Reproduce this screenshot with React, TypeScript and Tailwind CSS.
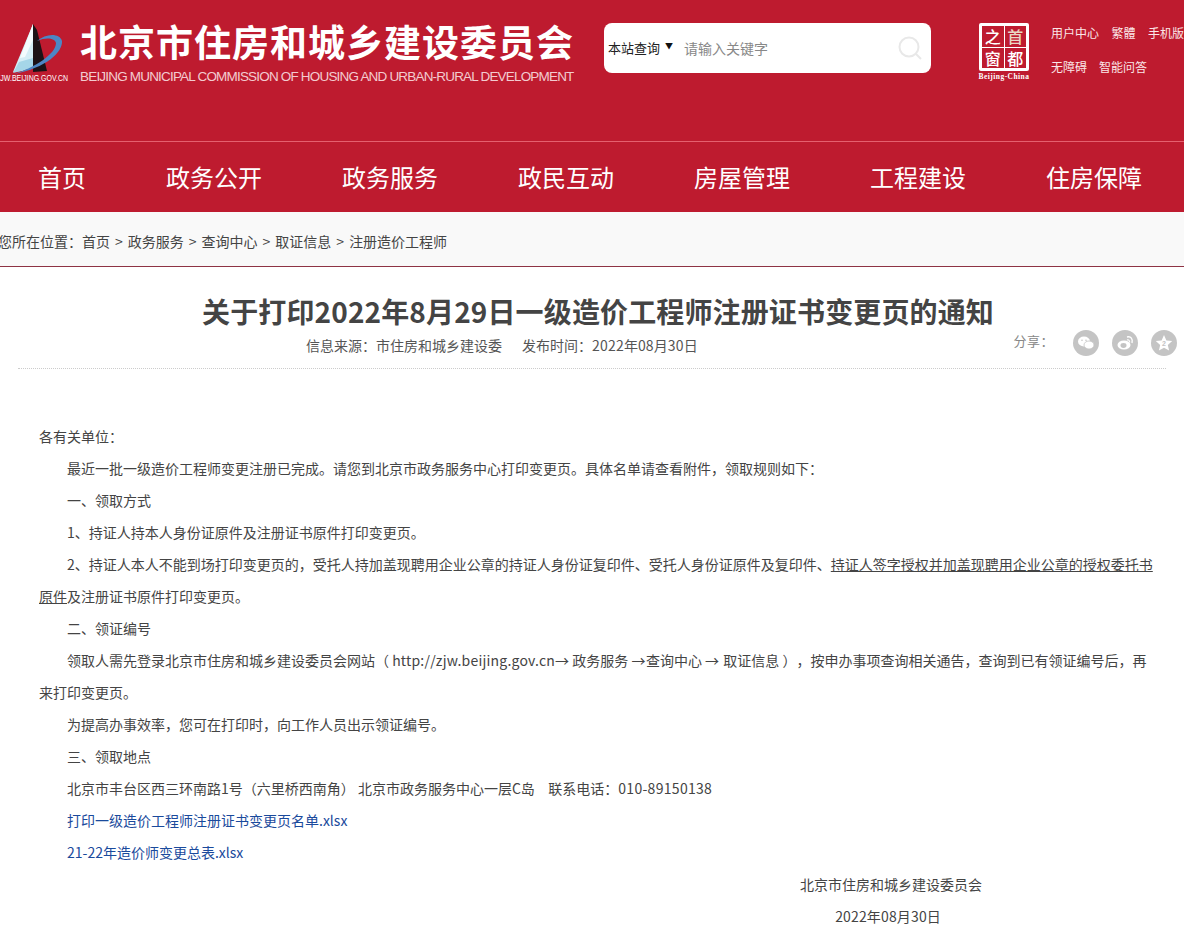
const cjk = "font-['Microsoft_YaHei','Noto_Sans_CJK_SC','Liberation_Sans',sans-serif]";

function Logo() {
  return (
    <svg width="80" height="90" viewBox="0 0 80 90" className="block">
      <path d="M33 24 L13 72 L22 71 L33 66 Z" fill="#d4edf5" />
      <path d="M33 24 L20 58 L25 57 L33 40 Z" fill="#f4fbfd" />
      <path d="M13 73 L19 62 L33 58 L33 68 Z" fill="#a5d6e8" />
      <path d="M33 24 L33 72 L47 71 L37 30 Z" fill="#1b1216" />
      <path d="M37 41 C46 33 60 33 62 41 C63 52 46 68 14 74 C34 68 56 54 56 43 C55 38 46 37 37 41 Z" fill="#4d86c4" />
      <text x="68" y="81" textAnchor="end" fill="#fff" fontSize="9" fontFamily="Liberation Sans" textLength="72" lengthAdjust="spacingAndGlyphs">ZJW.BEIJING.GOV.CN</text>
    </svg>
  );
}

function Seal() {
  return (
    <div className="flex flex-col items-center w-[54px]">
      <div className="w-[50px] h-[48px] bg-white rounded-[2px] p-[3px] grid grid-cols-2 grid-rows-2 gap-[1px]">
        {["之", "首", "窗", "都"].map((c, i) => (
          <div key={c} className={`flex items-center justify-center text-[16px] font-medium leading-none bg-[#be1b2f] ${i === 1 ? "text-[#e9d7c4]" : "text-white"}`}>{c}</div>
        ))}
      </div>
      <div className="text-[7.5px] leading-[10px] font-bold text-white font-['Liberation_Serif',serif] tracking-[.45px] whitespace-nowrap mt-[1px]">Beijing-China</div>
    </div>
  );
}

function Share({ kind }: { kind: "wx" | "wb" | "star" }) {
  return (
    <div className="w-[26px] h-[26px] rounded-full bg-[#c4c4c4] flex items-center justify-center">
      <svg width="18" height="18" viewBox="0 0 18 18" fill="#fff">
        {kind === "wx" && (
          <>
            <ellipse cx="7" cy="7.5" rx="6" ry="5" />
            <ellipse cx="12" cy="11" rx="5" ry="4" stroke="#c4c4c4" strokeWidth=".8" />
            <circle cx="5" cy="6.3" r=".8" fill="#c4c4c4" />
            <circle cx="9" cy="6.3" r=".8" fill="#c4c4c4" />
          </>
        )}
        {kind === "wb" && (
          <>
            <ellipse cx="8" cy="11" rx="6.5" ry="4.6" />
            <ellipse cx="7.5" cy="11.5" rx="3" ry="2.4" fill="#c4c4c4" />
            <path d="M11 3 C15 2 17 5 16 9" fill="none" stroke="#fff" strokeWidth="1.4" />
            <path d="M11 6 C13 5.5 14 7 13.6 8.5" fill="none" stroke="#fff" strokeWidth="1.1" />
          </>
        )}
        {kind === "star" && (
          <>
            <path d="M9 1 L11.4 6.4 L17.2 7 L12.8 10.9 L14.1 16.6 L9 13.7 L3.9 16.6 L5.2 10.9 L.8 7 L6.6 6.4 Z" />
            <text x="9" y="12" textAnchor="middle" fontSize="7" fontWeight="700" fill="#c4c4c4" fontFamily="Liberation Sans">2</text>
          </>
        )}
      </svg>
    </div>
  );
}

const nav = ["首页", "政务公开", "政务服务", "政民互动", "房屋管理", "工程建设", "住房保障"];

function P({ children, noIndent }: { children: React.ReactNode; noIndent?: boolean }) {
  return <p className={`leading-[32px] ${noIndent ? "" : "indent-[28px]"}`}>{children}</p>;
}

function L({ children }: { children: React.ReactNode }) {
  return <span className="tracking-[.3px]">{children}</span>;
}

export default function App() {
  return (
    <div className={`${cjk} [text-spacing-trim:space-all] w-[1184px] h-[934px] overflow-hidden bg-white text-[#444]`}>
      <header className="bg-[#be1b2f] h-[212px] flex flex-col text-white">
        <div className="h-[141px] flex items-start border-b border-[#e5606f] box-content">
          <div className="w-[80px] shrink-0"><Logo /></div>
          <div className="w-[524px] shrink-0 pt-[17px]">
            <div className="text-[37px] leading-[48px] font-bold whitespace-nowrap tracking-[1px]">北京市住房和城乡建设委员会</div>
            <div className="text-[13.5px] leading-[18px] text-[#f3cbd0] whitespace-nowrap tracking-[-.81px] mt-[3px] font-['Liberation_Sans',sans-serif]">BEIJING MUNICIPAL COMMISSION OF HOUSING AND URBAN-RURAL DEVELOPMENT</div>
          </div>
          <div className="w-[327px] h-[50px] mt-[23px] bg-white rounded-[8px] flex items-center shrink-0 pl-[4px] pr-[8px]">
            <span className="text-[13px] text-[#222] whitespace-nowrap">本站查询</span>
            <span className="text-[8px] text-[#111] ml-[5px] mb-[4px]">▼</span>
            <span className="text-[14px] text-[#888] ml-[11px] whitespace-nowrap">请输入关键字</span>
            <svg className="ml-auto" width="26" height="26" viewBox="0 0 26 26" fill="none" stroke="#e8e8e8" strokeWidth="2">
              <circle cx="12" cy="12" r="9.5" />
              <path d="M19 19 L24 24" />
            </svg>
          </div>
          <div className="ml-[46px] mt-[23px] shrink-0"><Seal /></div>
          <div className="ml-[20px] mt-[24px] text-[12px] leading-[18px] whitespace-nowrap text-[#fbe6e8] flex flex-col gap-[16px]">
            <div className="flex gap-[12.5px]"><span>用户中心</span><span>繁體</span><span>手机版</span></div>
            <div className="flex gap-[12px]"><span>无障碍</span><span>智能问答</span></div>
          </div>
        </div>
        <nav className="flex-1 flex items-center">
          {nav.map((n) => (
            <div key={n} className={`text-[24px] leading-[32px] whitespace-nowrap text-white ${n === "首页" ? "ml-[38px] mr-[80px]" : "mr-[80px]"}`}>{n}</div>
          ))}
        </nav>
      </header>

      <div className="h-[55px] bg-[#f9f9f9] border-b border-[#8e3344] flex items-center pt-[5px] text-[14px] text-[#444] whitespace-nowrap">
        <span className="ml-[-2px]">您所在位置：</span>
        <div className="flex gap-[5px]">
          <span>首页</span><span>&gt;</span><span>政务服务</span><span>&gt;</span><span>查询中心</span><span>&gt;</span><span>取证信息</span><span>&gt;</span><span>注册造价工程师</span>
        </div>
      </div>

      <main className="px-[18px]">
        <div className="border-b border-dotted border-[#ccc] h-[102px] flex flex-col">
          <h1 className="text-[28px] leading-[40px] font-bold text-center text-[#444] mt-[24px] pl-[12px] tracking-[.14px] whitespace-nowrap">关于打印2022年8月29日一级造价工程师注册证书变更页的通知</h1>
          <div className="relative h-[24px] mt-[2px] text-[14px] leading-[24px] text-[#555] whitespace-nowrap">
            <span className="ml-[288px]">信息来源：市住房和城乡建设委</span>
            <span className="ml-[20px]">发布时间：<span className="tracking-[.2px]">2022</span>年<span className="tracking-[.2px]">08</span>月<span className="tracking-[.2px]">30</span>日</span>
            <div className="absolute right-[-11px] top-[-4px] flex items-center">
              <span className="text-[13px] tracking-[.5px] text-[#888] mr-[19px] mb-[4px]">分享：</span>
              <div className="flex gap-[13px]"><Share kind="wx" /><Share kind="wb" /><Share kind="star" /></div>
            </div>
          </div>
        </div>

        <article className="pt-[51px] pl-[21px] pr-[8px] text-[14px] text-[#444]">
          <P noIndent>各有关单位：</P>
          <P>最近一批一级造价工程师变更注册已完成。请您到北京市政务服务中心打印变更页。具体名单请查看附件，领取规则如下：</P>
          <P>一、领取方式</P>
          <P>1、持证人持本人身份证原件及注册证书原件打印变更页。</P>
          <P>2、持证人本人不能到场打印变更页的，受托人持加盖现聘用企业公章的持证人身份证复印件、受托人身份证原件及复印件、<u>持证人签字授权并加盖现聘用企业公章的授权委托书原件</u>及注册证书原件打印变更页。</P>
          <P>二、领证编号</P>
          <P>领取人需先登录北京市住房和城乡建设委员会网站（ <span className="tracking-[.2px]">http://zjw.beijing.gov.cn→</span> 政务服务 <span className="tracking-[.5px]">→</span>查询中心 <span className="tracking-[1px]">→</span> 取证信息 ），按申办事项查询相关通告，查询到已有领证编号后，再来打印变更页。</P>
          <P>为提高办事效率，您可在打印时，向工作人员出示领证编号。</P>
          <P>三、领取地点</P>
          <P>北京市丰台区西三环南路1号（六里桥西南角） 北京市政务服务中心一层C岛&nbsp;&nbsp;&nbsp;<span className="ml-[4px]">联系电话：</span><L>010-89150138</L></P>
          <P><span className="text-[#1a4a9c]">打印一级造价工程师注册证书变更页名单.xlsx</span></P>
          <P><span className="text-[#1a4a9c]">21-22年造价师变更总表.xlsx</span></P>
          <div className="leading-[32px] text-right pr-[176px]">北京市住房和城乡建设委员会</div>
          <div className="leading-[32px] text-right pr-[217px] tracking-[.15px]">2022年08月30日</div>
        </article>
      </main>
    </div>
  );
}
